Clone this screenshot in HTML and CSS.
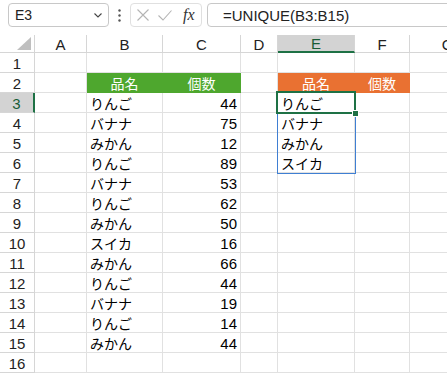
FILE: index.html
```html
<!DOCTYPE html>
<html>
<head>
  <meta charset="utf-8" />
  <title>UNIQUE</title>
  <link rel="stylesheet" href="styles.css">
</head>
<body>

<div class="toolbar">
  <div class="namebox">
    <span>E3</span>
    <svg width="8" height="5" viewBox="0 0 8 5"><polyline points="0.5,0.5 4,4 7.5,0.5" fill="none" stroke="#444" stroke-width="1.1"/></svg>
  </div>
  <div class="dots">
    <svg width="3" height="13" viewBox="0 0 3 13"><circle cx="1.5" cy="1.5" r="1.2" fill="#555"/><circle cx="1.5" cy="6.5" r="1.2" fill="#555"/><circle cx="1.5" cy="11.5" r="1.2" fill="#555"/></svg>
  </div>
  <div class="fxbtns">
    <svg class="ic-x" width="12" height="12" viewBox="0 0 12 12"><path d="M0.5 0.5 L11.5 11.5 M11.5 0.5 L0.5 11.5" stroke="#b4b4b4" stroke-width="1.1"/></svg>
    <svg class="ic-ok" width="14" height="11" viewBox="0 0 14 11"><polyline points="0.5,5.5 5,10 13.5,0.5" fill="none" stroke="#b4b4b4" stroke-width="1.1"/></svg>
    <span class="fx">fx</span>
  </div>
  <div class="formula">=UNIQUE(B3:B15)</div>
</div>

<div class="sheet">
  <div class="corner"><svg width="14" height="13" viewBox="0 0 14 13"><polygon points="14,0 14,13 0,13" fill="#bfbfbf"/></svg></div>
  <div class="hd">A</div><div class="hd">B</div><div class="hd">C</div><div class="hd">D</div><div class="hd on">E</div><div class="hd">F</div><div class="hd">G</div>

  <div class="rh">1</div><div></div><div></div><div></div><div></div><div></div><div></div><div></div>
  <div class="rh">2</div><div></div><div class="g">品名</div><div class="g">個数</div><div></div><div class="o">品名</div><div class="o">個数</div><div></div>
  <div class="rh on">3</div><div></div><div>りんご</div><div class="num">44</div><div></div><div>りんご</div><div></div><div></div>
  <div class="rh">4</div><div></div><div>バナナ</div><div class="num">75</div><div></div><div>バナナ</div><div></div><div></div>
  <div class="rh">5</div><div></div><div>みかん</div><div class="num">12</div><div></div><div>みかん</div><div></div><div></div>
  <div class="rh">6</div><div></div><div>りんご</div><div class="num">89</div><div></div><div>スイカ</div><div></div><div></div>
  <div class="rh">7</div><div></div><div>バナナ</div><div class="num">53</div><div></div><div></div><div></div><div></div>
  <div class="rh">8</div><div></div><div>りんご</div><div class="num">62</div><div></div><div></div><div></div><div></div>
  <div class="rh">9</div><div></div><div>みかん</div><div class="num">50</div><div></div><div></div><div></div><div></div>
  <div class="rh">10</div><div></div><div>スイカ</div><div class="num">16</div><div></div><div></div><div></div><div></div>
  <div class="rh">11</div><div></div><div>みかん</div><div class="num">66</div><div></div><div></div><div></div><div></div>
  <div class="rh">12</div><div></div><div>りんご</div><div class="num">44</div><div></div><div></div><div></div><div></div>
  <div class="rh">13</div><div></div><div>バナナ</div><div class="num">19</div><div></div><div></div><div></div><div></div>
  <div class="rh">14</div><div></div><div>りんご</div><div class="num">14</div><div></div><div></div><div></div><div></div>
  <div class="rh">15</div><div></div><div>みかん</div><div class="num">44</div><div></div><div></div><div></div><div></div>
  <div class="rh">16</div><div></div><div></div><div></div><div></div><div></div><div></div><div></div>

  <!-- spill range + active cell, drawn over the grid -->
  <span class="spill"></span>
  <span class="active"></span>
  <span class="handle"></span>
</div>

</body>
</html>
```

FILE: styles.css
```css
* { box-sizing: border-box; }
html, body { margin: 0; }
body {
  width: 447px;
  height: 374px;
  overflow: hidden;
  background: #fff;
  font-family: "Liberation Sans", "Noto Sans CJK JP", sans-serif;
  color: #000;
}
.toolbar {
  height: 35px;
  display: flex;
  align-items: flex-start;
  padding: 3px 0 0 8px;
}
.namebox {
  width: 101px;
  height: 24px;
  border: 1px solid #c8c8c8;
  border-radius: 4px;
  display: flex;
  align-items: center;
  justify-content: space-between;
  padding: 0 6px 0 6px;
  font-size: 14px;
  color: #222;
}
.dots {
  width: 21px;
  height: 24px;
  display: flex;
  align-items: center;
  justify-content: center;
}
.fxbtns {
  width: 72px;
  height: 24px;
  border: 1px solid #e0e0e0;
  border-radius: 4px;
  display: flex;
  align-items: center;
  padding-left: 6px;
}
.ic-ok { margin-left: 9px; }
.fx {
  margin-left: 11px;
  font: italic 16px "Liberation Serif", serif;
  color: #333;
}
.formula {
  flex: 1;
  height: 24px;
  margin: 0 -10px 0 5px;
  border: 1px solid #c8c8c8;
  border-radius: 4px;
  padding-left: 15px;
  display: flex;
  align-items: center;
  font-size: 15px;
  color: #222;
}
.sheet {
  position: relative;
  display: grid;
  grid-template-columns: 35px 52px 76px 78px 37px 77px 55px 76px;
  grid-template-rows: 18px repeat(16, 20px);
}
.sheet > div {
  border-right: 1px solid #e1e1e1;
  border-bottom: 1px solid #e1e1e1;
  display: flex;
  align-items: center;
  padding: 1px 3px 0;
  font-size: 14px;
  white-space: nowrap;
  overflow: hidden;
}
.sheet > .hd,
.sheet > .rh {
  justify-content: center;
  font-size: 15px;
  color: #222;
  border-color: #d6d6d6;
}
.sheet > .corner {
  align-items: flex-end;
  justify-content: flex-end;
  padding: 0 3px 2px 0;
  border-color: #d6d6d6;
}
.sheet > .hd.on {
  background: #d3d3d3;
  color: #185c37;
  border-bottom: 2px solid #1e7145;
}
.sheet > .rh.on {
  background: #d3d3d3;
  color: #185c37;
  border-right: 2px solid #1e7145;
}
.sheet > .num { justify-content: flex-end; font-size: 15px; }
.sheet > .g,
.sheet > .o {
  justify-content: center;
  color: #fff;
  border-color: transparent;
}
.sheet > .g { background: #4ea72e; }
.sheet > .o { background: #e97132; }

.spill {
  position: absolute;
  left: 277px;
  top: 57px;
  width: 79px;
  height: 82px;
  border: 1px solid #3f7fd3;
}
.active {
  position: absolute;
  left: 276px;
  top: 56px;
  width: 80px;
  height: 23px;
  border: 2px solid #1e7145;
}
.handle {
  position: absolute;
  left: 352px;
  top: 75px;
  width: 7px;
  height: 7px;
  background: #1e7145;
  border: 1px solid #fff;
}
```
